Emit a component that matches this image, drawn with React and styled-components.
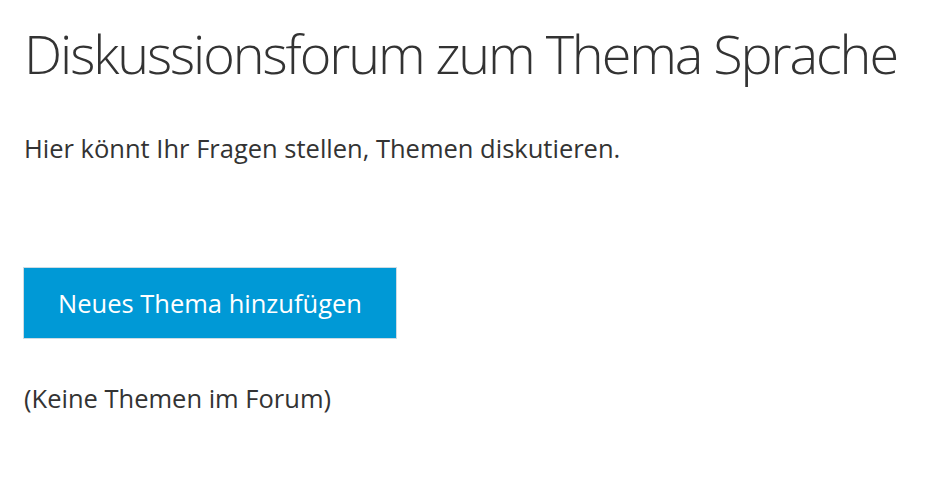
import styled, { createGlobalStyle } from "styled-components";

const GlobalStyle = createGlobalStyle`
  body {
    margin: 0;
    background: #fff;
    font-family: "Open Sans", "Noto Sans", sans-serif;
    color: #333;
  }
`;

const Page = styled.div`
  padding: 20px 24px 0 23px;
  display: flex;
  flex-direction: column;
  align-items: flex-start;
`;

const Title = styled.h1`
  margin: 0 0 0 1px;
  font-size: 54px;
  font-weight: 300;
  line-height: 66px;
  color: #333;
  letter-spacing: -2.1px;
  white-space: nowrap;
`;

const Text = styled.p`
  margin: ${(p) => p.$top}px 0 0 1px;
  font-size: 25.5px;
  line-height: 34px;
  white-space: nowrap;
`;

const AddButton = styled.button`
  margin-top: 102px;
  width: 374px;
  height: 72px;
  padding: 0;
  background: #0099d6;
  border: 1px solid #cddbe3;
  color: #fff;
  font-family: inherit;
  font-size: 25.5px;
  cursor: pointer;
`;

const App = () => (
  <>
    <GlobalStyle />
    <Page>
      <Title>Diskussionsforum zum Thema Sprache</Title>
      <Text $top={45}>Hier könnt Ihr Fragen stellen, Themen diskutieren.</Text>
      <AddButton>Neues Thema hinzufügen</AddButton>
      <Text $top={42}>(Keine Themen im Forum)</Text>
    </Page>
  </>
);

export default App;
